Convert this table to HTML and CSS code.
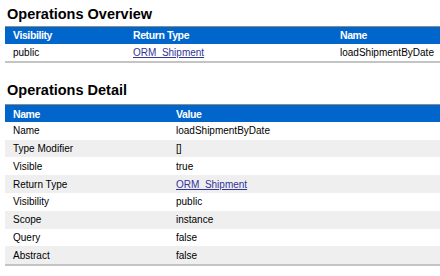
FILE: index.html
```html
<!DOCTYPE html>
<html lang="en">
<head>
  <meta charset="UTF-8" />
  <title>Operations</title>
  <link rel="stylesheet" href="styles.css">
</head>
<body>
  <h2>Operations Overview</h2>
  <table class="grid overview">
    <tr class="head">
      <th class="c1">Visibility</th>
      <th class="c2">Return Type</th>
      <th>Name</th>
    </tr>
    <tr>
      <td>public</td>
      <td><a href="#">ORM_Shipment</a></td>
      <td>loadShipmentByDate</td>
    </tr>
  </table>

  <h2 class="spaced">Operations Detail</h2>
  <table class="grid detail">
    <tr class="head">
      <th class="d1">Name</th>
      <th>Value</th>
    </tr>
    <tr><td>Name</td><td>loadShipmentByDate</td></tr>
    <tr class="alt"><td>Type Modifier</td><td>[]</td></tr>
    <tr><td>Visible</td><td>true</td></tr>
    <tr class="alt"><td>Return Type</td><td><a href="#">ORM_Shipment</a></td></tr>
    <tr><td>Visibility</td><td>public</td></tr>
    <tr class="alt"><td>Scope</td><td>instance</td></tr>
    <tr><td>Query</td><td>false</td></tr>
    <tr class="alt"><td>Abstract</td><td>false</td></tr>
  </table>
</body>
</html>
```

FILE: styles.css
```css
body {
  margin: 0;
  padding: 0 0 0 5px;
  font-family: 'Liberation Sans', Arial, sans-serif;
  font-size: 10px;
  color: #000;
  background: #fff;
}

h2 {
  margin: 0 0 3px;
  padding: 5px 0 0 2px;
  font-size: 14.5px;
  font-weight: bold;
  line-height: 18px;
}

h2.spaced {
  margin-bottom: 5px;
}

.overview {
  margin-bottom: 13px;
}

.grid {
  width: 435px;
  border-collapse: collapse;
  border-bottom: 2px solid #c4c4c4;
}

.grid th {
  box-sizing: border-box;
  background: #0066cc;
  color: #fff;
  text-align: left;
  font-size: 10.5px;
  font-weight: bold;
  letter-spacing: -0.4px;
  height: 17px;
  padding: 0 0 0 8px;
  border-top: 1px solid #8c8c8c;
}

.grid td {
  height: 17.8px;
  padding: 0 0 0 8px;
}

.grid .alt td {
  background: #efefef;
}

.c1 { width: 120px; }
.c2 { width: 207px; }
.d1 { width: 163px; }

a {
  color: #333399;
}
```
